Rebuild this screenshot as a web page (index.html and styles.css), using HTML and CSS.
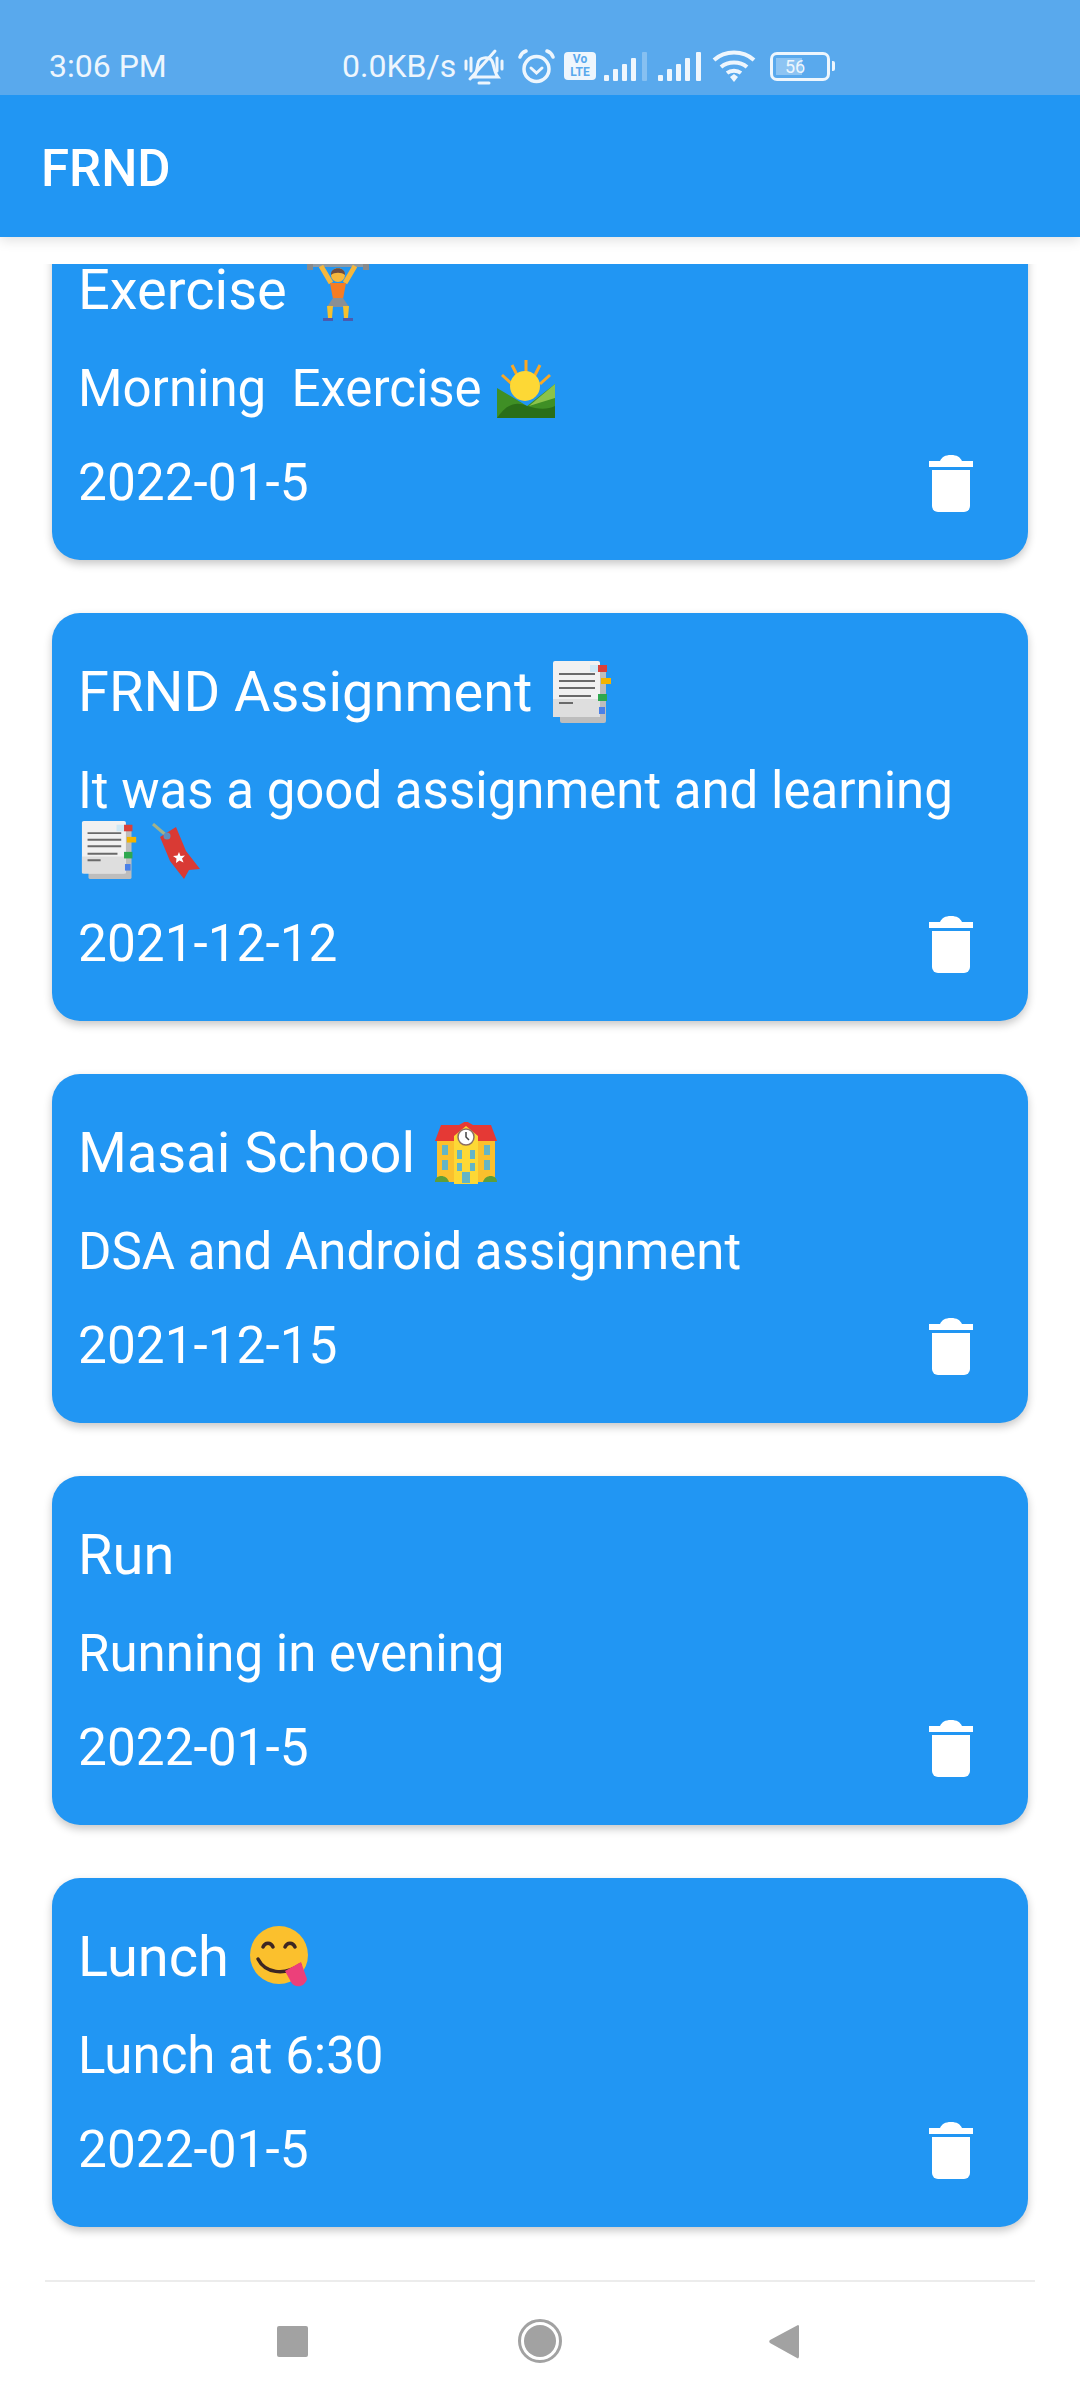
FILE: index.html
```html
<!DOCTYPE html>
<html lang="en">
<head>
<meta charset="utf-8">
<title>FRND</title>
<link rel="stylesheet" href="styles.css">
</head>
<body>
<svg class="defs" width="0" height="0" aria-hidden="true">
  <defs>
    <symbol id="trash" viewBox="0 0 44 58">
      <path d="M0 13V7h11c2-4 5-6 11-6s9 2 11 6h11v6z" fill="#fff"/>
      <path d="M3 16h38v36a6 6 0 0 1-6 6H9a6 6 0 0 1-6-6z" fill="#fff"/>
    </symbol>
    <symbol id="memo" viewBox="0 0 60 62">
      <rect x="7" y="6" width="46" height="56" rx="2" fill="#bdbdbd"/>
      <rect x="0" y="0" width="47" height="56" rx="2" fill="#f1f1f1"/>
      <rect x="0" y="38" width="47" height="18" fill="#dedede"/>
      <rect x="37" y="4" width="8" height="7" fill="#cfe8f5"/>
      <rect x="45" y="4" width="9" height="7" fill="#d9403a"/>
      <rect x="48" y="17" width="10" height="6" fill="#f4b400"/>
      <rect x="45" y="33" width="9" height="7" fill="#2ea84f"/>
      <rect x="46" y="46" width="6" height="7" fill="#4a80e8"/>
      <path d="M6 13h36M6 20h36M6 27h36M6 35h32M6 42h14" stroke="#6a6a6a" stroke-width="2" fill="none"/>
    </symbol>
    <symbol id="lifter" viewBox="0 0 62 62">
      <rect x="3" y="4" width="56" height="4" fill="#8d9aa5"/>
      <rect x="0" y="0" width="6" height="11" fill="#8a8a8a"/>
      <rect x="56" y="0" width="6" height="11" fill="#8a8a8a"/>
      <path d="M14 7l10 17M48 7L38 24" fill="none" stroke="#f6b73c" stroke-width="5"/>
      <circle cx="31" cy="16" r="7" fill="#f6b73c"/>
      <path d="M24 16c-1-9 15-9 14 0-3-3-11-3-14 0z" fill="#6d4c41"/>
      <path d="M23 24h16l-3 16H26z" fill="#f57c22"/>
      <path d="M26 39h10l6 9H20z" fill="#8a8f94"/>
      <path d="M20 47h6l-1 12h-4zM36 47h6l-1 12h-4z" fill="#f6c02d"/>
      <path d="M16 59h10v3H16zM36 59h10v3H36z" fill="#4a5bb0"/>
    </symbol>
    <symbol id="sunrise" viewBox="0 0 58 58">
      <g stroke="#f9a825" stroke-width="3">
        <path d="M29 0v14M15 5l6 12M43 5l-6 12M5 15l10 9M53 15l-10 9"/>
      </g>
      <circle cx="28" cy="26" r="15" fill="#fdd835"/>
      <path d="M0 28l30 18 28-22v34H0z" fill="#3f8f25"/>
      <path d="M32 46l26-22v14z" fill="#8bc34a"/>
      <path d="M0 58c8-12 18-18 30-12 10 3 20 4 28 0v12z" fill="#2a6e18"/>
    </symbol>
    <symbol id="bookmark" viewBox="0 0 48 56">
      <path d="M1 1l14 12" stroke="#a3b18a" stroke-width="3" fill="none"/>
      <path d="M8 14L24 4l10 24 14 18-11 1-5 9-14-18z" fill="#d93a34"/>
      <circle cx="15" cy="13" r="3.500" fill="#5f8fbf"/>
      <path d="M27 29l1.500 4 4.500-.5-3 3 1.500 4-4-2-3.500 2.500.5-4.500-3.500-2.500 4.500-.5z" fill="#fff"/>
    </symbol>
    <symbol id="school" viewBox="0 0 62 62">
      <rect x="2" y="18" width="58" height="42" fill="#fbc02d"/>
      <path d="M0 19L6 3h18l7-4 7 4h18l6 16z" fill="#e53935"/>
      <path d="M19 62V14L31 4l12 10v48z" fill="#fdd835"/>
      <circle cx="31" cy="15" r="8" fill="#fff" stroke="#8d6e63" stroke-width="1.500"/>
      <path d="M31 10v5l3 3" stroke="#444" stroke-width="1.500" fill="none"/>
      <g fill="#64b5c6">
        <rect x="7" y="23" width="6" height="10"/><rect x="49" y="23" width="6" height="10"/>
        <rect x="7" y="38" width="6" height="10"/><rect x="49" y="38" width="6" height="10"/>
        <rect x="22" y="28" width="5" height="9"/><rect x="35" y="28" width="5" height="9"/>
        <rect x="22" y="41" width="5" height="8"/><rect x="35" y="41" width="5" height="8"/>
        <rect x="27" y="50" width="8" height="11"/>
      </g>
      <path d="M0 60c0-8 12-8 14 0zM48 60c2-8 14-8 14 0z" fill="#5d9e3a"/>
    </symbol>
    <symbol id="yum" viewBox="0 0 62 62">
      <circle cx="30" cy="29" r="29" fill="#fbc02d"/>
      <path d="M14 21c2-5 8-5 10 0M36 21c2-5 8-5 10 0" stroke="#3e2723" stroke-width="3.500" fill="none" stroke-linecap="round"/>
      <path d="M9 33c7 14 26 17 42 6" stroke="#3e2723" stroke-width="3.500" fill="none" stroke-linecap="round"/>
      <path d="M36 45l16-9 6 17c-2 8-12 10-16 3z" fill="#ec407a"/>
    </symbol>
  </defs>
</svg>

<div class="screen">
  <header class="top">
    <div class="status">
      <span class="time">3:06 PM</span>
      <div class="status-icons">
        <span class="net">0.0KB/s</span>
        <svg class="ic-bell" viewBox="0 0 40 37"><g fill="none" stroke="#eef6fd" stroke-width="3" stroke-linecap="round"><path d="M10 29c3-4 3-9 4-14 1-6 11-7 14-2 2 4 2 11 6 16z"/><path d="M15 35h10M6 31L31 3M2 13v8M38 13v8M7 10v13M33 10v13"/></g></svg>
        <svg class="ic-alarm" viewBox="0 0 37 35"><g fill="none" stroke="#eef6fd" stroke-width="3.500" stroke-linecap="round"><circle cx="18.500" cy="20" r="12.500"/><path d="M2 8c1-3 3-5 6-6M35 8c-1-3-3-5-6-6"/><path d="M13 19l5.500 5 5.500-5" stroke-width="3"/></g></svg>
        <span class="volte">Vo<br>LTE</span>
        <svg class="ic-signal" viewBox="0 0 44 29"><g fill="#eef6fd"><rect x="0" y="23" width="5" height="6" rx="1"/><rect x="9" y="17" width="5" height="12" rx="1"/><rect x="18" y="12" width="5" height="17" rx="1"/><rect x="27" y="6" width="5" height="23" rx="1"/><rect x="38" y="0" width="5" height="29" rx="1" opacity=".3"/></g></svg>
        <svg class="ic-signal" viewBox="0 0 44 29"><g fill="#eef6fd"><rect x="0" y="23" width="5" height="6" rx="1"/><rect x="9" y="17" width="5" height="12" rx="1"/><rect x="18" y="12" width="5" height="17" rx="1"/><rect x="27" y="6" width="5" height="23" rx="1"/><rect x="38" y="0" width="5" height="29" rx="1"/></g></svg>
        <svg class="ic-wifi" viewBox="0 0 44 32"><g fill="none" stroke="#eef6fd" stroke-width="4"><path d="M2 10c11-10 29-10 40 0M9 17c7-6 19-6 26 0M15 23c4-3 10-3 14 0"/></g><path d="M18 27l4-3 4 3-4 5z" fill="#eef6fd"/></svg>
        <div class="battery"><div class="batt-body"><span class="batt-fill">56</span></div><span class="batt-tip"></span></div>
      </div>
    </div>
    <div class="appbar">FRND</div>
  </header>

  <main class="list">
    <article class="card">
      <h2 class="title">Exercise <svg class="emoji"><use href="#lifter"/></svg></h2>
      <p class="desc">Morning&nbsp; Exercise <svg class="emoji small"><use href="#sunrise"/></svg></p>
      <div class="foot"><span class="date">2022-01-5</span><svg class="trash"><use href="#trash"/></svg></div>
    </article>
    <article class="card">
      <h2 class="title">FRND Assignment <svg class="emoji"><use href="#memo"/></svg></h2>
      <p class="desc">It was a good assignment and learning <svg class="emoji small"><use href="#memo"/></svg> <svg class="emoji mark"><use href="#bookmark"/></svg></p>
      <div class="foot"><span class="date">2021-12-12</span><svg class="trash"><use href="#trash"/></svg></div>
    </article>
    <article class="card">
      <h2 class="title">Masai School <svg class="emoji"><use href="#school"/></svg></h2>
      <p class="desc">DSA and Android assignment</p>
      <div class="foot"><span class="date">2021-12-15</span><svg class="trash"><use href="#trash"/></svg></div>
    </article>
    <article class="card">
      <h2 class="title">Run</h2>
      <p class="desc">Running in evening</p>
      <div class="foot"><span class="date">2022-01-5</span><svg class="trash"><use href="#trash"/></svg></div>
    </article>
    <article class="card">
      <h2 class="title">Lunch <svg class="emoji"><use href="#yum"/></svg></h2>
      <p class="desc">Lunch at 6:30</p>
      <div class="foot"><span class="date">2022-01-5</span><svg class="trash"><use href="#trash"/></svg></div>
    </article>
  </main>

  <footer class="navbar">
    <span class="nav-square"></span>
    <span class="nav-home"><span class="nav-dot"></span></span>
    <svg class="nav-back" viewBox="0 0 30 35"><path d="M29 1c1 0 1 1 1 2v29c0 2-1 3-2 2L1 19c-1-1-1-2 0-3z" fill="#a2a2a2"/></svg>
  </footer>
</div>
</body>
</html>
```

FILE: styles.css
```css
* { box-sizing: border-box; }
html, body { margin: 0; padding: 0; }
body {
  width: 1080px;
  height: 2400px;
  background: #fff;
  font-family: Roboto, "Noto Sans", sans-serif;
  overflow: hidden;
}
.defs { display: block; height: 0; }
.screen { width: 1080px; height: 2400px; display: flex; flex-direction: column; }

.top { position: relative; z-index: 2; box-shadow: 0 3px 12px rgba(0, 0, 0, .13); flex: none; }
.status {
  height: 95px;
  background: #59a9ed;
  color: #eef6fd;
  display: flex;
  align-items: flex-end;
  padding: 0 0 11px 49px;
  font-size: 32px;
}
.time { width: 293px; line-height: 36px; }
.status-icons { display: flex; align-items: center; height: 36px; }
.net { width: 122px; line-height: 36px; }
.ic-bell { width: 40px; height: 37px; margin-right: 14px; }
.ic-alarm { width: 37px; height: 35px; margin-right: 9px; }
.volte {
  width: 32px;
  height: 28px;
  margin-right: 8px;
  background: #eef6fd;
  color: #59a9ed;
  border-radius: 4px;
  font-size: 12px;
  font-weight: 700;
  line-height: 13px;
  text-align: center;
  padding-top: 1px;
}
.ic-signal { width: 44px; height: 29px; margin-right: 10px; }
.ic-wifi { width: 44px; height: 32px; margin-right: 14px; }
.battery { display: flex; align-items: center; }
.batt-body {
  width: 60px;
  height: 29px;
  border: 3px solid #eef6fd;
  border-radius: 7px;
  padding: 3px;
  display: flex;
}
.batt-fill {
  width: 54%;
  flex: none;
  background: #8dc4f3;
  color: #eef6fd;
  font-size: 18px;
  line-height: 17px;
  white-space: nowrap;
  padding-left: 9px;
}
.batt-tip { width: 3px; height: 10px; margin-left: 2px; background: #eef6fd; border-radius: 0 2px 2px 0; }
.appbar {
  height: 142px;
  background: #2196f3;
  color: #fff;
  font-size: 51px;
  font-weight: 500;
  line-height: 136px;
  padding: 6px 0 0 41px;
}

.list {
  flex: none;
  height: 2016px;
  margin-top: 27px;
  padding: 0 52px 53px;
  overflow: hidden;
  display: flex;
  flex-direction: column;
  justify-content: flex-end;
  gap: 53px;
}
.card {
  flex: none;
  background: #2196f3;
  border-radius: 28px;
  color: #fff;
  padding: 48px 26px 49px;
  box-shadow: 0 4px 8px rgba(0, 0, 0, .22);
}
.title {
  margin: 0;
  font-size: 56px;
  font-weight: 400;
  line-height: 62px;
  height: 62px;
}
.desc {
  margin: 38px 0 0;
  font-size: 51px;
  line-height: 59px;
}
.foot {
  margin-top: 36px;
  display: flex;
  justify-content: space-between;
  align-items: center;
  height: 57px;
  padding-right: 29px;
}
.date { font-size: 51.4px; line-height: 57px; }
.trash { width: 44px; height: 58px; }
.emoji { width: 62px; height: 62px; margin-left: 6px; vertical-align: -12px; }
.emoji.small { width: 58px; height: 58px; margin-left: 3px; vertical-align: -12px; }
.emoji.mark { width: 48px; height: 56px; margin-left: 0; vertical-align: -12px; }

.navbar {
  flex: none;
  height: 120px;
  margin: 0 45px;
  border-top: 2px solid #ececec;
  position: relative;
  display: flex;
  align-items: center;
  padding: 0 0 0 232px;
}
.nav-square { width: 31px; height: 31px; background: #a2a2a2; border-radius: 2px; margin-right: 210px; }
.nav-home {
  width: 44px;
  height: 44px;
  border: 3px solid #a2a2a2;
  border-radius: 50%;
  padding: 3px;
  margin-right: 207px;
}
.nav-dot { display: block; width: 32px; height: 32px; border-radius: 50%; background: #a2a2a2; }
.nav-back { width: 30px; height: 35px; }
```
